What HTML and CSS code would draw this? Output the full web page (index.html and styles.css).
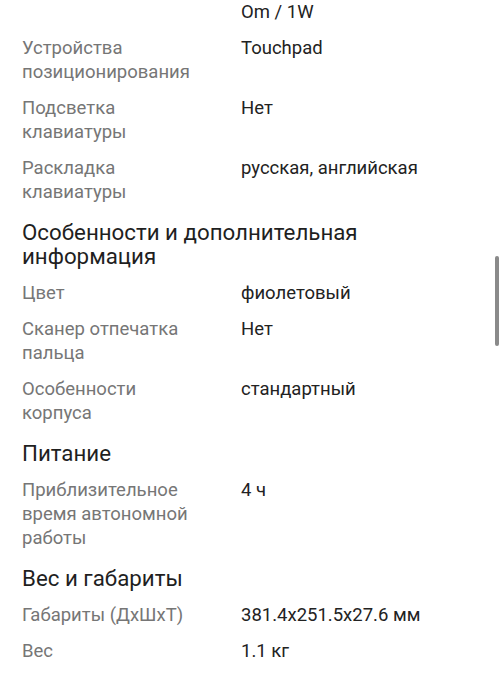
FILE: index.html
```html
<!DOCTYPE html>
<html lang="ru">
<head>
<meta charset="utf-8">
<title>Характеристики</title>
<link rel="stylesheet" href="styles.css">
</head>
<body>
<div class="page">
  <div class="row first"><div class="label"></div><div class="value">Om / 1W</div></div>
  <div class="row"><div class="label">Устройства позиционирования</div><div class="value">Touchpad</div></div>
  <div class="row"><div class="label">Подсветка клавиатуры</div><div class="value">Нет</div></div>
  <div class="row"><div class="label">Раскладка клавиатуры</div><div class="value">русская, английская</div></div>

  <h2 class="section">Особенности и дополнительная информация</h2>
  <div class="row"><div class="label">Цвет</div><div class="value">фиолетовый</div></div>
  <div class="row"><div class="label">Сканер отпечатка пальца</div><div class="value">Нет</div></div>
  <div class="row"><div class="label">Особенности корпуса</div><div class="value">стандартный</div></div>

  <h2 class="section">Питание</h2>
  <div class="row"><div class="label">Приблизительное время автономной работы</div><div class="value">4 ч</div></div>

  <h2 class="section">Вес и габариты</h2>
  <div class="row"><div class="label">Габариты (ДхШхТ)</div><div class="value">381.4x251.5x27.6 мм</div></div>
  <div class="row"><div class="label">Вес</div><div class="value">1.1 кг</div></div>
</div>
<div class="scrollbar"></div>
</body>
</html>
```
FILE: styles.css
```css
html, body {
  margin: 0;
  padding: 0;
  background: #ffffff;
}
body {
  font-family: Roboto, "Noto Sans", sans-serif;
  overflow: hidden;
  height: 700px;
}
.page {
  padding: 0 24px 0 22px;
}
.row {
  display: grid;
  grid-template-columns: 180px 1fr;
  column-gap: 39px;
  padding: 6px 0;
  font-size: 18.5px;
  line-height: 24px;
}
.row.first {
  padding-top: 0;
}
.label {
  color: #767676;
}
.value {
  color: #222222;
}
.section {
  margin: 0;
  padding: 10px 0 7px;
  font-size: 22.3px;
  font-weight: 400;
  line-height: 24px;
  color: #1f1f1f;
  max-width: 380px;
}
.scrollbar {
  position: fixed;
  right: 4px;
  top: 256px;
  width: 4px;
  height: 90px;
  border-radius: 2px;
  background: #8a8a8a;
}
```
